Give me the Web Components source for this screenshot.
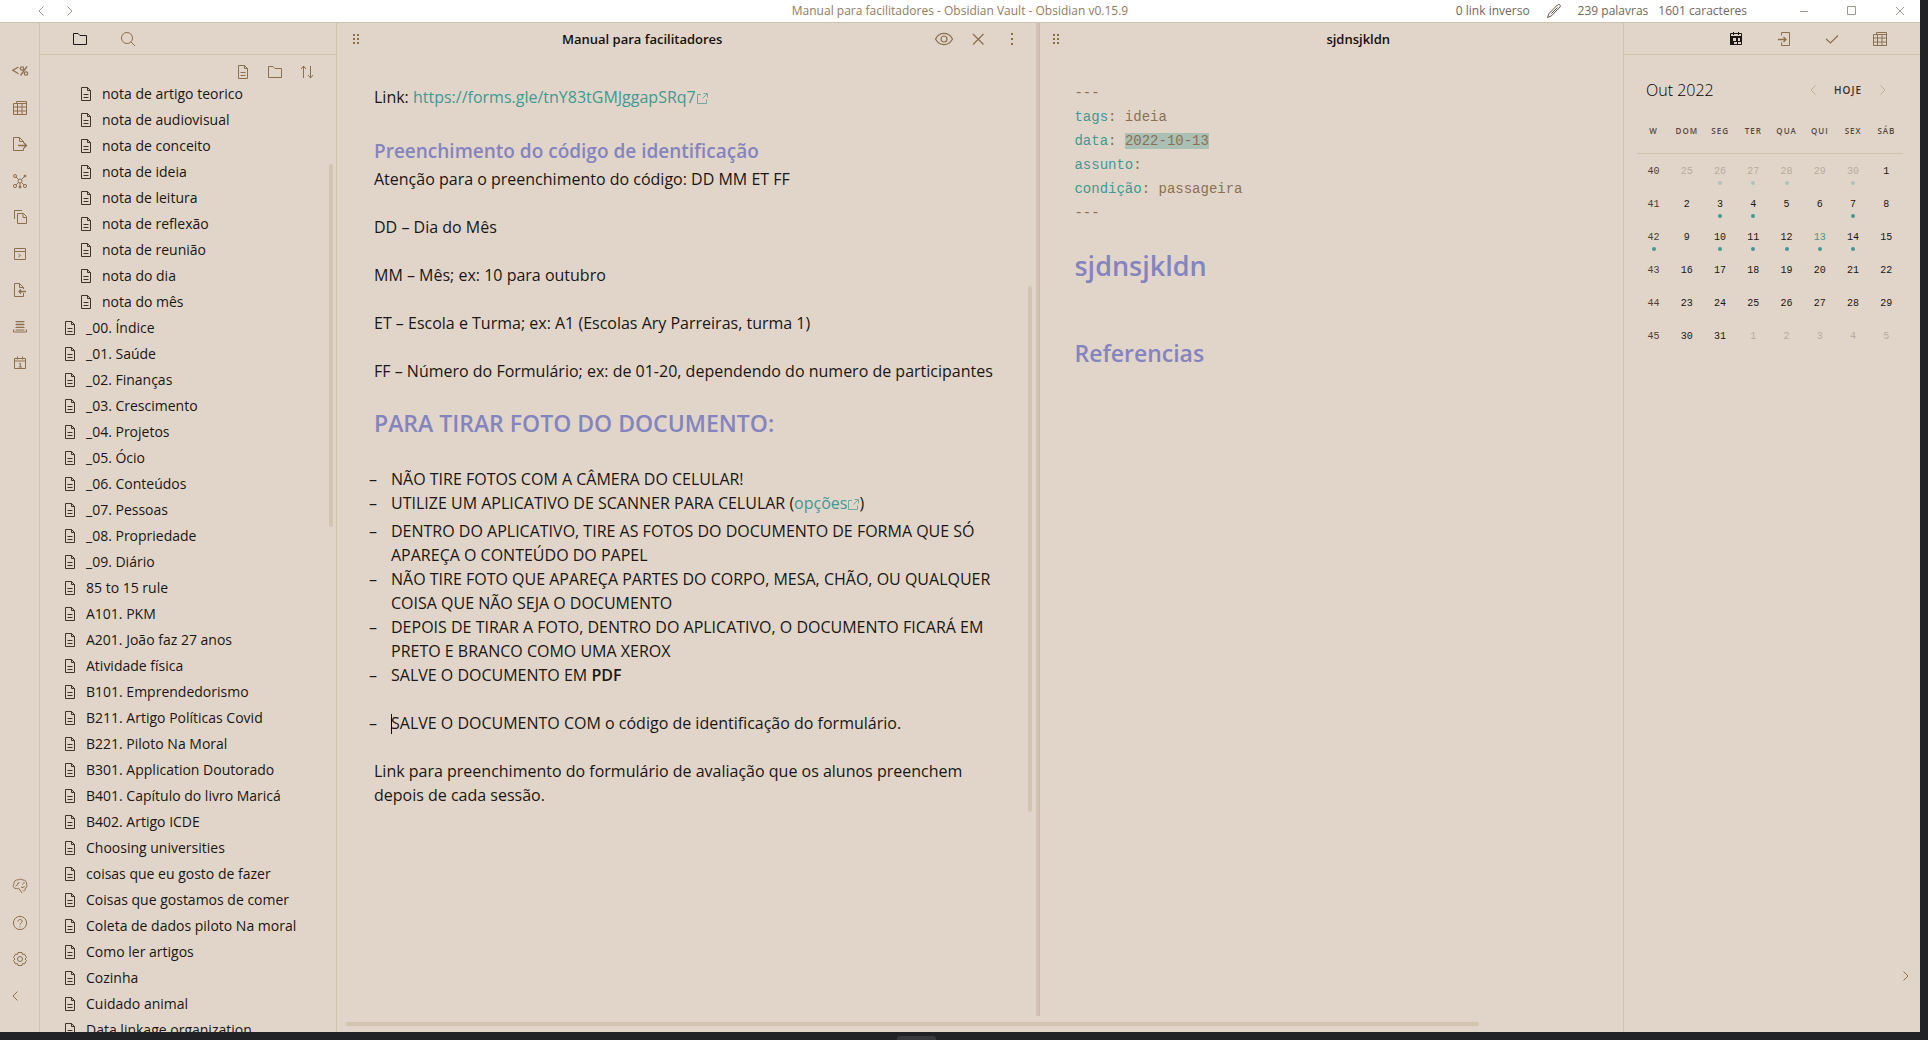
<!DOCTYPE html>
<html lang="pt-BR">
<head>
<meta charset="utf-8">
<title>Manual para facilitadores - Obsidian Vault</title>
<style>
  :root {
    --bg: #e1d5c9; --line: #d2c2ad; --icon: #8b7050; --text: #1b1613;
    --teal: #3f9994; --head: #8484bf; --thumb: #d3c3b1;
    --mono: "Liberation Mono", "DejaVu Sans Mono", monospace;
  }
  html, body { height: 100%; }
  body {
    margin: 0; box-sizing: border-box; padding: 0 8px 8px 0; overflow: hidden;
    background: #212226; color: var(--text);
    font: 400 14px/26px "Open Sans", "Noto Sans", sans-serif;
  }
</style>
</head>
<body>
<vault-app></vault-app>
<script>
const ICONS = {
  left: '<path d="M10.5 3.5 6 8l4.500 4.500"/>',
  right: '<path d="M5.500 3.500 10 8l-4.500 4.500"/>',
  doc: '<path d="M3.500 1.500h6l3 3v10h-9zM9.500 1.500v3h3M5.500 8.500h5M5.500 11.500h5"/>',
  folder: '<path d="M1.500 13V2.500h4.500l2 2h6.500v9h-13z"/>',
  search: '<circle cx="7" cy="7" r="5.500"/><path d="m11 11 4 4"/>',
  sort: '<path d="M4.500 14V2M2 5l2.500-3L7 5M11.500 2v12M9 11l2.500 3L14 11"/>',
  template: '<path d="M6.500 4 .8 7.300l5.700 3.400M15 3.500l-6.500 9" stroke-width="1.300"/><circle cx="10" cy="5.500" r="1.700" stroke-width="1.200"/><circle cx="14" cy="10.500" r="1.700" stroke-width="1.200"/>',
  table: '<path d="M1.500 3.500h13v11h-13zM4.500 3.500v-2h10v13M1.500 7h13M1.500 11h13M5.500 3.500v11M10 3.500v11"/>',
  exportdoc: '<path d="M11.500 12v2.500h-10v-13h6l4 4V7M7.500 1.500v4h4"/><path d="M6 9.500h8.500M12 7l2.500 2.500L12 12" stroke-width="1.300"/>',
  graph: '<circle cx="8" cy="8" r="2"/><circle cx="3" cy="3" r="1.500"/><circle cx="3" cy="13" r="1.600"/><circle cx="13" cy="13" r="1.600"/><circle cx="13" cy="3" r="1" fill="currentColor"/><circle cx="8" cy="14" r="1" fill="currentColor"/><path d="m4 4 2.500 2.500M4.200 11.800 6.500 9.500M11.800 11.800 9.500 9.500M12.200 3.800 9.500 6.500M8 10v3"/>',
  copy: '<path d="M2.500 10V1.500H10M5.500 5v9.500h9V7.500L11.500 4.500h-6zM11 4.500v4h3.500"/>',
  terminal: '<path d="M2.500 2.500h11v11h-11zM2.500 5.500h11M6.500 8l2 1.500-2 1.500"/>',
  importdoc: '<path d="M11.500 11v3.500h-9v-13h5l4 4V7M7.500 1.500v4h4"/><path d="M14 9.500H7M9 7.500l-2 2 2 2" stroke-width="1.300"/>',
  stack: '<path d="M3.500 2.500h9M3.500 5.500h9M3.500 8.500h9M3.500 11h9M1.500 10.500v2.500h13v-2.500"/><path d="M4 4h8M4 7h8" opacity=".5"/>',
  day: '<path d="M2.500 3.500h11v10h-11zM2.500 6h11M5.500 1.500v3M10.500 1.500v3M7 9l1.300-.7V12M6.500 12h3.500"/>',
  brain: '<path d="M4 10.500C1 10.500.6 7 2 6 1.500 3 4 1.500 6 2 7.500.8 9.500 1 11 2 13.500 2 15 4 14.500 6 15.500 8 14.500 10 13 10.500 13.500 12.500 12 14 11 12.500M4 10.500c1 .5 2 0 2.500-.5l3.500 5M5 5.500C6 6 7.500 5.500 7 4M10.500 6.500c.5-1.500 1.500-2 2.500-1.500M3.500 8l2.500-1.500M9 9c1.500 1 3 .5 3.500-1"/>',
  help: '<circle cx="8" cy="8" r="6.600"/><path d="M6 6.500C6 3.800 10.200 4 10.200 6.300 10.200 8 8 7.800 8 9.700M8 11.300v1"/>',
  gear: '<circle cx="8" cy="8" r="2.500"/><path d="M6 1.500h4l.5 2 2-.5 2 3.500L13 8l1.500 1.500-2 3.500-2-.5-.5 2H6l-.5-2-2 .5-2-3.500L3 8 1.500 6.500l2-3.500 2 .5z" stroke-linejoin="round"/>',
  eye: '<path d="M-.5 8C3.500 .5 12.500 .5 16.500 8 12.500 15.500 3.500 15.500-.5 8z" stroke-width="1.200"/><circle cx="8" cy="8" r="3" stroke-width="1.200"/>',
  close: '<path d="m3 3 10.500 10.500M13.500 3 3 13.500" stroke-width="1.300"/>',
  more: '<path d="M7 2h2v2H7zM7 7h2v2H7zM7 12h2v2H7z" fill="currentColor" stroke="none"/>',
  grip: '<path d="M5 3h2v2H5zM9 3h2v2H9zM5 7h2v2H5zM9 7h2v2H9zM5 11h2v2H5zM9 11h2v2H9z" fill="currentColor" stroke="none"/>',
  pen: '<path d="M1.500 14.500 3 10.500 11.500 2C13 .5 15.200 2 14 4L5.500 12.800zM5.500 10.500l6-6"/>',
  min: '<path d="M4 8.500h8"/>',
  max: '<path d="M3.500 3.500h8v8h-8z"/>',
  x: '<path d="m4 4 8 8M12 4l-8 8"/>',
  calendar: '<path d="M2.500 2.500h11v11h-11z"/><path d="M2 5h12v1H2zM2 6h3v5H2zM5 6h9v1H5zM8 7h2v3H8zM12 7h2v4h-2zM2 10h4v4H2zM6 10h8v1H6zM9 11h1v3H9z" fill="currentColor" stroke="none"/><path d="M5.500 1v3M10.500 1v3"/>',
  enter: '<path d="M5.500 4.500v-3h8v13h-8v-3"/><path d="M2 8.500h8M7.500 6l2.500 2.500L7.500 11" stroke-width="1.300"/>',
  check: '<path d="m2 8 4.500 4L14 4.500" stroke-width="1.200"/>',
  ext: '<path d="M5 4.500H1.500v9h9V9.500M7.500 3.500h4V7.500M11 4 6.500 8.500"/>'
};

const define = (name, markup) => customElements.define(name, class extends HTMLElement {
  constructor() { super(); this.attachShadow({ mode: 'open' }); }
  connectedCallback() {
    this.shadowRoot.innerHTML = typeof markup === 'function' ? markup(this) : markup;
  }
});

define('ui-icon', el => `<style>:host{display:inline-block;width:16px;height:16px}svg{display:block;overflow:visible}</style>
<svg width="16" height="16" viewBox="0 0 16 16" fill="none" stroke="currentColor" aria-hidden="true">${ICONS[el.getAttribute('name')]}</svg>`);

define('icon-button', el => `<style>:host{display:block;color:var(--icon)}
button{all:unset;display:flex;width:16px;height:16px;cursor:pointer}</style>
<button type="button" aria-label="${el.getAttribute('label')}"><ui-icon name="${el.getAttribute('name')}"></ui-icon></button>`);

define('title-bar', `<style>
:host{display:grid;grid-template-columns:1fr auto 1fr;align-items:center;height:22px;background:#fff;border-bottom:1px solid var(--line);font-size:12px;line-height:20px;color:#70675e}
.nav,.end{display:flex;align-items:center}
.nav{padding-left:33px;gap:13px}
.nav icon-button,.win icon-button{color:#9c9791}
h1{margin:0;font-size:12px;line-height:20px;font-weight:400;color:#927b61}
.end{justify-content:flex-end;padding-right:12px}
.pen{color:#5d534a;margin:0 16px}
.words{margin-right:10px}
.win{display:flex;gap:32px;margin-left:49px}
</style>
<div class="nav"><icon-button name="left" label="Voltar"></icon-button><icon-button name="right" label="Avançar"></icon-button></div>
<h1>Manual para facilitadores - Obsidian Vault - Obsidian v0.15.9</h1>
<div class="end"><span>0 link inverso</span><ui-icon class="pen" name="pen"></ui-icon><span class="words">239 palavras</span><span>1601 caracteres</span>
<div class="win"><icon-button name="min" label="Minimizar"></icon-button><icon-button name="max" label="Maximizar"></icon-button><icon-button name="x" label="Fechar"></icon-button></div></div>`);

const btns = list => list.map(([n, l]) => `<icon-button name="${n}" label="${l}"></icon-button>`).join('');

define('side-ribbon', `<style>
:host{display:flex;flex-direction:column;justify-content:space-between;align-items:center;box-sizing:border-box;width:40px;padding:40px 0 28px;border-right:1px solid var(--line)}
div{display:flex;flex-direction:column;justify-content:space-between;height:308px}
.low{height:126px}
.low icon-button:last-child{margin-left:-5px}
</style><div>${btns([['template','Modelos'],['table','Tabela'],['exportdoc','Exportar'],['graph','Gráfico'],['copy','Copiar'],['terminal','Comandos'],['importdoc','Importar'],['stack','Revisão'],['day','Nota do dia']])}</div>
<div class="low">${btns([['brain','Cofre'],['help','Ajuda'],['gear','Configurações'],['left','Recolher']])}</div>`);

define('file-item', `<style>
:host{display:block}
a{display:flex;align-items:center;gap:8px;height:26px;padding-left:22px;color:inherit;text-decoration:none;white-space:nowrap}
:host([nested]) a{padding-left:38px}
ui-icon{color:#403329;flex:none}
span{line-height:26px}
</style><a href="#"><ui-icon name="doc"></ui-icon><span><slot></slot></span></a>`);

const nested = ['nota de artigo teorico','nota de audiovisual','nota de conceito','nota de ideia','nota de leitura','nota de reflexão','nota de reunião','nota do dia','nota do mês'];
const files = ['_00. Índice','_01. Saúde','_02. Finanças','_03. Crescimento','_04. Projetos','_05. Ócio','_06. Conteúdos','_07. Pessoas','_08. Propriedade','_09. Diário','85 to 15 rule','A101. PKM','A201. João faz 27 anos','Atividade física','B101. Emprendedorismo','B211. Artigo Políticas Covid','B221. Piloto Na Moral','B301. Application Doutorado','B401. Capítulo do livro Maricá','B402. Artigo ICDE','Choosing universities','coisas que eu gosto de fazer','Coisas que gostamos de comer','Coleta de dados piloto Na moral','Como ler artigos','Cozinha','Cuidado animal','Data linkage organization'];

define('file-explorer', `<style>
:host{display:flex;flex-direction:column;box-sizing:border-box;width:297px;min-height:0;border-right:1px solid var(--line);position:relative}
.tabs{display:flex;gap:32px;align-items:center;height:31px;padding-left:32px;border-bottom:1px solid var(--line);flex:none}
.tabs icon-button:first-child{--icon:#1b1613}
.acts{display:flex;justify-content:flex-end;gap:16px;padding:9px 21px 1px 0;flex:none}
nav{flex:1;min-height:0;overflow:hidden}
.thumb{position:absolute;right:3px;top:14%;height:36%;width:4px;border-radius:2px;background:var(--thumb)}
</style>
<div class="tabs">${btns([['folder','Arquivos'],['search','Buscar']])}</div>
<div class="acts">${btns([['doc','Nova nota'],['folder','Nova pasta'],['sort','Ordenar']])}</div>
<nav>${nested.map(f => `<file-item nested>${f}</file-item>`).join('')}${files.map(f => `<file-item>${f}</file-item>`).join('')}</nav>
<div class="thumb"></div>`);

define('note-pane', `<style>
:host{display:flex;flex-direction:column;position:relative;min-width:0}
header{display:flex;align-items:center;height:32px;padding:0 19px 0 var(--lead,11px);flex:none}
header ui-icon{color:var(--icon)}
h2{flex:1;margin:0;text-align:center;font-size:13px;line-height:26px;font-weight:600;color:#15100d}
.acts{display:flex;gap:18px}
</style>
<header><ui-icon name="grip"></ui-icon><h2><slot name="title"></slot></h2><div class="acts"><slot name="actions"></slot></div></header>
<slot></slot>`);

const ext = '<ui-icon name="ext"></ui-icon>';
define('manual-note', `<style>
:host{display:block;padding:30px 37px 0 37px;font-size:16px;line-height:24px}
p,ul{margin:0 0 24px}
h3{margin:0;padding-top:2px;font-size:19px;line-height:32px;font-weight:600;color:var(--head)}
h2{margin:0 0 28px;font-size:23px;line-height:32px;font-weight:600;color:var(--head)}
a{color:var(--teal);text-decoration:none}
a ui-icon{width:12px;height:13px;opacity:.7}
ul{list-style:none;padding:0;margin-left:-5px}
li{display:grid;grid-template-columns:22px 1fr}
li::before{content:"–"}
.tall{padding-bottom:4px}
b{font-weight:600}
.caret{display:inline-block;width:1px;height:20px;margin-right:-1px;background:#000;vertical-align:-5px}
</style>
<p>Link: <a href="#">https://forms.gle/tnY83tGMJggapSRq7${ext}</a></p>
<h3>Preenchimento do código de identificação</h3>
<p>Atenção para o preenchimento do código: DD MM ET FF</p>
<p>DD – Dia do Mês</p>
<p>MM – Mês; ex: 10 para outubro</p>
<p>ET – Escola e Turma; ex: A1 (Escolas Ary Parreiras, turma 1)</p>
<p>FF – Número do Formulário; ex: de 01-20, dependendo do numero de participantes</p>
<h2>PARA TIRAR FOTO DO DOCUMENTO:</h2>
<ul>
<li><span>NÃO TIRE FOTOS COM A CÂMERA DO CELULAR!</span></li>
<li class="tall"><span>UTILIZE UM APLICATIVO DE SCANNER PARA CELULAR (<a href="#">opções${ext}</a>)</span></li>
<li><span>DENTRO DO APLICATIVO, TIRE AS FOTOS DO DOCUMENTO DE FORMA QUE SÓ APAREÇA O CONTEÚDO DO PAPEL</span></li>
<li><span>NÃO TIRE FOTO QUE APAREÇA PARTES DO CORPO, MESA, CHÃO, OU QUALQUER COISA QUE NÃO SEJA O DOCUMENTO</span></li>
<li><span>DEPOIS DE TIRAR A FOTO, DENTRO DO APLICATIVO, O DOCUMENTO FICARÁ EM PRETO E BRANCO COMO UMA XEROX</span></li>
<li><span>SALVE O DOCUMENTO EM <b>PDF</b></span></li>
</ul>
<ul><li><span><i class="caret"></i>SALVE O DOCUMENTO COM o código de identificação do formulário.</span></li></ul>
<p>Link para preenchimento do formulário de avaliação que os alunos preenchem depois de cada sessão.</p>`);

define('idea-note', `<style>
:host{display:block;padding:26px 34px 0}
div{font:14px/24px var(--mono);color:var(--icon)}
b{font-weight:400;color:var(--teal)}
mark{background:#abc0b5;color:inherit}
h1,h2{font-weight:600;color:var(--head)}
h1{margin:23px 0 0;font-size:27px;line-height:36px}
h2{margin:52px 0 0;font-size:23px;line-height:34px}
</style>
<div>---</div>
<div><b>tags</b>: ideia</div>
<div><b>data</b>: <mark>2022-10-13</mark></div>
<div><b>assunto</b>:</div>
<div><b>condição</b>: passageira</div>
<div>---</div>
<h1>sjdnsjkldn</h1>
<h2>Referencias</h2>`);

const weeks = [
  [40, '25- 26-* 27-* 28-* 29- 30-* 1'], [41, '2 3* 4* 5 6 7* 8'], ['42*', '9 10* 11* 12* 13+* 14* 15'],
  [43, '16 17 18 19 20 21 22'], [44, '23 24 25 26 27 28 29'], [45, '30 31 1- 2- 3- 4- 5-']
];
const cell = (v, tag) => {
  v = String(v);
  const cls = v.includes('-') ? 'off' : v.includes('+') ? 'today' : '';
  return `<${tag} class="${cls}">${parseInt(v)}<i class="${v.includes('*') ? 'dot' : ''}"></i></${tag}>`;
};

define('calendar-side', `<style>
:host{display:flex;flex-direction:column;box-sizing:border-box;width:297px;border-left:1px solid var(--line)}
.tabs{display:flex;gap:32px;align-items:center;justify-content:flex-end;height:31px;padding-right:32px;border-bottom:1px solid var(--line);flex:none}
.tabs icon-button:first-child{--icon:#1b1613}
.month{display:flex;align-items:center;padding:22px 29px 0 22px}
h2{flex:1;margin:0;font-size:16px;line-height:26px;font-weight:300;color:#000}
.month icon-button{--icon:#bfae98}
.today-btn{all:unset;font-size:10px;font-weight:600;line-height:16px;letter-spacing:1px;padding:0 13px;color:#3a3028;cursor:pointer}
table{table-layout:fixed;border-collapse:collapse;width:calc(100% - 30px);margin:15px 17px 0 13px}
th,td{padding:0;text-align:center;font:400 10px/12px var(--mono);height:33px;vertical-align:top;box-sizing:border-box}
tbody th{color:#4a4038}
thead th{font:600 8px/12px "Open Sans",sans-serif;letter-spacing:1px;height:35px;padding-top:7px;color:#55493f;border-bottom:1px solid var(--line)}
tbody th,tbody td{padding-top:12px}
i{display:block;width:4px;height:4px;margin:3px auto 2px;border-radius:50%}
.dot{background:var(--teal)}
.off{color:#b8ab9f}
.off .dot{opacity:.3}
.today{color:var(--teal)}
.foot{margin-top:auto;padding:0 6px 48px;display:flex;justify-content:flex-end}
</style>
<div class="tabs">${btns([['calendar','Calendário'],['enter','Links'],['check','Tarefas'],['table','Tabela']])}</div>
<div class="month"><h2>Out 2022</h2><icon-button name="left" label="Mês anterior"></icon-button><button type="button" class="today-btn">HOJE</button><icon-button name="right" label="Próximo mês"></icon-button></div>
<table><thead><tr>${'W DOM SEG TER QUA QUI SEX SÁB'.split(' ').map(d => `<th scope="col">${d}</th>`).join('')}</tr></thead>
<tbody>${weeks.map(([w, d]) => `<tr>${cell(w, 'th')}${d.split(' ').map(x => cell(x, 'td')).join('')}</tr>`).join('')}</tbody></table>
<div class="foot"><icon-button name="right" label="Expandir"></icon-button></div>`);

define('vault-app', `<style>
:host{display:flex;flex-direction:column;height:100%;background:var(--bg);position:relative}
title-bar{flex:none}
.body{flex:1;display:flex;min-height:0}
main{flex:1;display:flex;flex-direction:column;min-width:0;position:relative}
.panes{flex:1;display:flex;min-height:0}
.first{flex:703;border-right:1px solid #c9b9a6;box-shadow:inset -3px 0 0 #d0c2b4}
.first span{margin-right:16px}
.second{flex:583;--lead:8px}
.second span{margin-left:48px}
.vthumb{position:absolute;right:7px;top:26.500%;height:53%;width:4px;border-radius:2px;background:var(--thumb)}
.track{height:16px;flex:none;padding:6px 0 0 9px;box-sizing:border-box}
.hthumb{width:88.700%;height:4px;border-radius:2px;background:var(--thumb)}
.task{position:absolute;top:calc(100% + 4px);left:897px;width:39px;height:4px;background:#38393c;border-radius:3px 3px 0 0}
</style>
<title-bar></title-bar>
<div class="body">
<side-ribbon></side-ribbon><file-explorer></file-explorer>
<main><div class="panes">
<note-pane class="first"><span slot="title">Manual para facilitadores</span>
<icon-button slot="actions" name="eye" label="Visualizar"></icon-button><icon-button slot="actions" name="close" label="Fechar"></icon-button><icon-button slot="actions" name="more" label="Mais opções"></icon-button>
<manual-note></manual-note><div class="vthumb"></div></note-pane>
<note-pane class="second"><span slot="title">sjdnsjkldn</span><idea-note></idea-note></note-pane>
</div><div class="track"><div class="hthumb"></div></div></main>
<calendar-side></calendar-side>
</div><div class="task"></div>`);
</script>
</body>
</html>
